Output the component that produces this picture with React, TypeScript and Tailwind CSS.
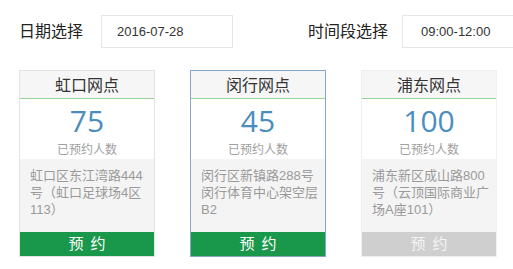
const font = { fontFamily: '"Liberation Sans", "Noto Sans CJK SC", sans-serif' };

type Site = {
  name: string;
  count: number;
  address: string[];
  active?: boolean;
  full?: boolean;
};

const sites: Site[] = [
  { name: "虹口网点", count: 75, address: ["虹口区东江湾路444", "号（虹口足球场4区", "113）"] },
  { name: "闵行网点", count: 45, address: ["闵行区新镇路288号", "闵行体育中心架空层", "B2"], active: true },
  { name: "浦东网点", count: 100, address: ["浦东新区成山路800", "号（云顶国际商业广", "场A座101）"], full: true },
];

function SiteCard({ site }: { site: Site }) {
  return (
    <div
      className={
        "flex w-[136px] flex-col border " +
        (site.active ? "border-[#86a8c6]" : site.full ? "border-[#efefef]" : "border-[#e3e3e3]")
      }
    >
      <div className="flex h-[28px] items-center justify-center border-b border-[#97d497] bg-[#f6f6f6] pt-[3px] text-[16px] text-[#333]">
        {site.name}
      </div>
      <div className="flex h-[60px] flex-col items-center bg-white">
        <div className="mt-[5px] text-[30px] leading-[34px] text-[#4b8dbd]" style={{ fontFamily: '"Open Sans", sans-serif' }}>
          {site.count}
        </div>
        <div className="mt-[4px] text-[12px] leading-[16px] text-[#a0a0a0]">已预约人数</div>
      </div>
      <div className="h-[73px] bg-[#f4f4f4] px-[10px] pt-[8px] text-[13px] leading-[17px] text-[#9a9a9a]">
        {site.address.map((line) => (
          <div key={line} className="whitespace-nowrap">{line}</div>
        ))}
      </div>
      <div
        className={
          "flex h-[24px] items-center justify-center gap-[7px] text-[15px] " +
          (site.full ? "bg-[#cfcfcf] text-[#f4f4f4]" : "bg-[#19974a] text-white")
        }
      >
        <span>预</span>
        <span>约</span>
      </div>
    </div>
  );
}

export default function App() {
  return (
    <div className="h-[269px] w-[513px] overflow-hidden bg-white" style={font}>
      <div className="mt-[15px] flex h-[33px] items-center whitespace-nowrap pl-[19px]">
        <span className="shrink-0 text-[16px] text-[#222]">日期选择</span>
        <div className="ml-[18px] flex h-[33px] w-[132px] shrink-0 items-center border border-[#e6e6e6] pl-[15px] text-[13px] text-[#333]">
          2016-07-28
        </div>
        <span className="ml-[75px] shrink-0 text-[16px] text-[#222]">时间段选择</span>
        <div className="ml-[14px] flex h-[33px] w-[125px] shrink-0 items-center border border-[#e6e6e6] pl-[18px] text-[13px] text-[#333]">
          09:00-12:00
        </div>
      </div>
      <div className="mt-[22px] flex gap-[35px] pl-[19px]">
        {sites.map((s) => (
          <SiteCard key={s.name} site={s} />
        ))}
      </div>
    </div>
  );
}
